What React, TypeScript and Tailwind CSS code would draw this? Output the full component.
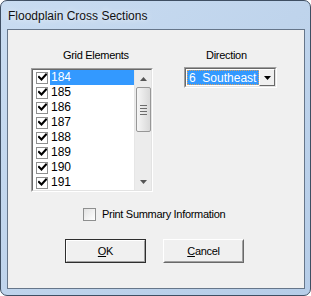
import * as React from "react";

const ITEMS = [184, 185, 186, 187, 188, 189, 190, 191];

function Check() {
  return (
    <svg width="9" height="9" viewBox="0 0 9 9" aria-hidden="true">
      <path d="M1 4 L3.5 6.5 L8 1.5" fill="none" stroke="#000" strokeWidth="2" strokeLinecap="square" />
    </svg>
  );
}

function ListRow({ n, selected }: { n: number; selected?: boolean }) {
  return (
    <div className="flex h-[15px] items-center">
      <div className="ml-[3px] flex h-[12px] w-[12px] items-center justify-center border border-[#8e8f8f] bg-white">
        <Check />
      </div>
      <span
        className={
          selected
            ? "ml-[2px] flex h-[15px] flex-1 items-center bg-[#3399ff] pl-[1px] text-white"
            : "ml-[2px] pl-[1px] text-black"
        }
      >
        {n}
      </span>
    </div>
  );
}

function ScrollBar() {
  return (
    <div className="flex h-full w-[17px] flex-col items-center border-l border-[#e6e6e6] bg-[#ececec]">
      {/* up arrow */}
      <div className="flex h-[17px] w-full items-center justify-center">
        <svg width="7" height="4" viewBox="0 0 7 4" aria-hidden="true">
          <path d="M0 4 L3.5 0 L7 4 Z" fill="#555" />
        </svg>
      </div>
      {/* thumb */}
      <div className="flex h-[45px] w-[15px] flex-col items-center justify-center gap-[2px] rounded-[2px] border border-[#979797] bg-gradient-to-r from-[#f6f6f6] to-[#d9d9d9]">
        <div className="h-px w-[7px] bg-[#6d6d6d]" />
        <div className="h-px w-[7px] bg-[#6d6d6d]" />
        <div className="h-px w-[7px] bg-[#6d6d6d]" />
        <div className="h-px w-[7px] bg-[#6d6d6d]" />
      </div>
      <div className="flex-1" />
      {/* down arrow */}
      <div className="flex h-[17px] w-full items-center justify-center">
        <svg width="7" height="4" viewBox="0 0 7 4" aria-hidden="true">
          <path d="M0 0 L3.5 4 L7 0 Z" fill="#555" />
        </svg>
      </div>
    </div>
  );
}

export default function App() {
  return (
    <div
      className="relative h-[296px] w-[311px] overflow-hidden rounded-[7px] border border-[#3f4f63] bg-gradient-to-br from-[#c9dcf1] via-[#bfd4ec] to-[#b6cde8]"
      style={{ fontFamily: '"Liberation Sans", Arial, sans-serif' }}
    >
      {/* ── Title bar ── */}
      <div className="flex h-[28px] items-center pl-[7px] pt-[1px]">
        <span
          className="text-[12px] text-[#111]"
          style={{ textShadow: "0 0 6px rgba(255,255,255,0.9)" }}
        >
          Floodplain Cross Sections
        </span>
      </div>

      {/* ── Client area ── */}
      <div className="ml-[6px] h-[260px] w-[298px] border border-[#66768a] bg-[#f0f0f0] text-[11px] tracking-[-0.3px] text-black">
        <div className="flex pt-[18px]">
          {/* Grid elements column */}
          <div className="ml-[23px] flex w-[122px] flex-col">
            <div className="h-[14px] pl-[32px] leading-[14px]">Grid Elements</div>
            <div className="mt-[6px] h-[124px] border border-t-[#a0a0a0] border-l-[#a0a0a0] border-b-white border-r-white">
              <div className="flex h-full border border-t-[#696969] border-l-[#696969] border-b-[#e3e3e3] border-r-[#e3e3e3] bg-white">
                <div className="flex-1 overflow-hidden text-[12px] leading-[15px] tracking-normal">
                  {ITEMS.map((n, i) => (
                    <ListRow key={n} n={n} selected={i === 0} />
                  ))}
                </div>
                <ScrollBar />
              </div>
            </div>
          </div>

          {/* Direction column */}
          <div className="ml-[31px] flex w-[93px] flex-col">
            <div className="h-[14px] pl-[22px] leading-[14px]">Direction</div>
            <div className="mt-[5px] h-[21px] border border-t-[#a0a0a0] border-l-[#a0a0a0] border-b-white border-r-white">
              <div className="flex h-full items-center border border-t-[#696969] border-l-[#696969] border-b-[#e3e3e3] border-r-[#e3e3e3] bg-white pl-[1px]">
                <div className="flex h-[15px] flex-1 items-center border border-dotted border-[#d9a060] bg-[#3399ff] pl-[1px] text-[12px] tracking-normal text-white">
                  6&nbsp;&nbsp;Southeast
                </div>
                <div className="flex h-[17px] w-[16px] items-center justify-center border border-t-white border-l-white border-b-[#696969] border-r-[#696969] bg-[#f0f0f0]">
                  <svg width="7" height="4" viewBox="0 0 7 4" aria-hidden="true">
                    <path d="M0 0 L3.5 4 L7 0 Z" fill="#000" />
                  </svg>
                </div>
              </div>
            </div>
          </div>
        </div>

        {/* Print summary checkbox */}
        <div className="ml-[75px] mt-[16px] flex h-[13px] items-center">
          <div className="h-[13px] w-[13px] border border-[#8e8f8f] bg-gradient-to-br from-[#e2e2e2] to-white" />
          <span className="ml-[6px] leading-[13px]">Print Summary Information</span>
        </div>

        {/* Buttons */}
        <div className="ml-[57px] mt-[18px] flex gap-[17px]">
          <button className="h-[24px] w-[81px] border border-[#2e2e2e] bg-[#f0f0f0]">
            <div className="flex h-full w-full items-center justify-center border border-t-white border-l-white border-b-[#a0a0a0] border-r-[#a0a0a0]">
              <span>
                <span className="underline">O</span>K
              </span>
            </div>
          </button>
          <button className="h-[24px] w-[81px] border border-t-white border-l-white border-b-[#696969] border-r-[#696969] bg-[#f0f0f0]">
            <div className="flex h-full w-full items-center justify-center border border-t-[#f0f0f0] border-l-[#f0f0f0] border-b-[#a0a0a0] border-r-[#a0a0a0]">
              <span>
                <span className="underline">C</span>ancel
              </span>
            </div>
          </button>
        </div>
      </div>
    </div>
  );
}
